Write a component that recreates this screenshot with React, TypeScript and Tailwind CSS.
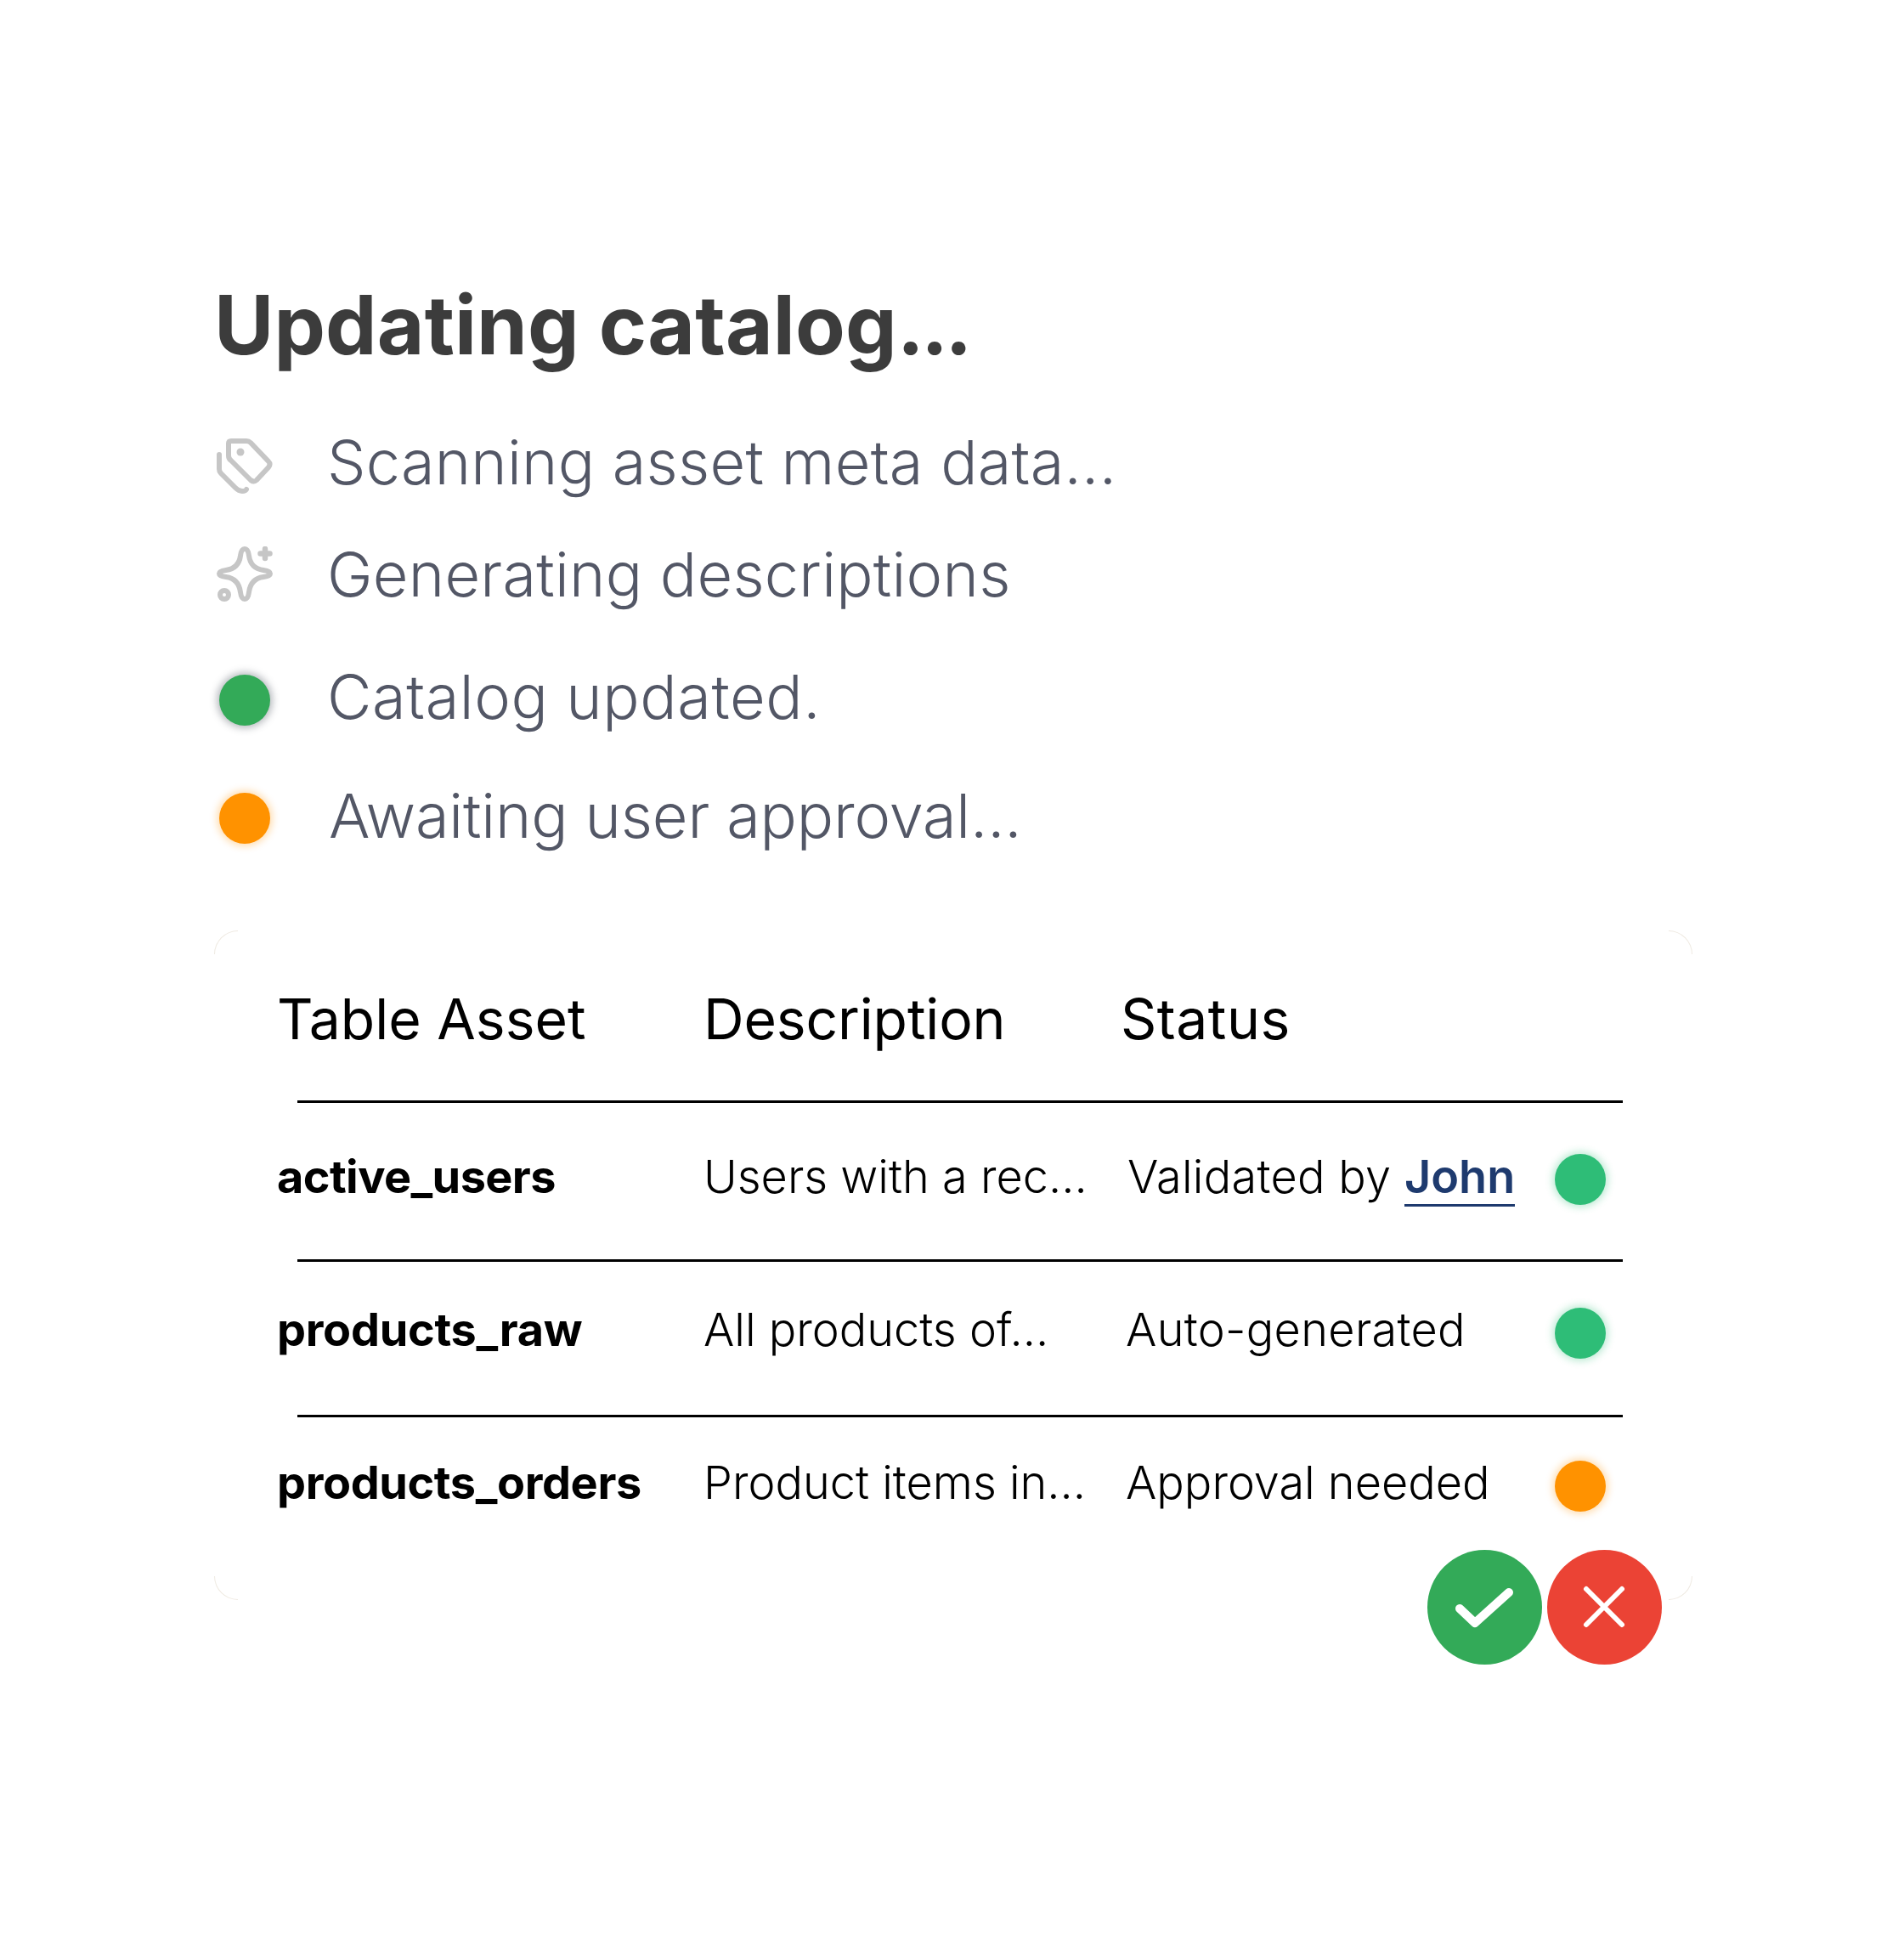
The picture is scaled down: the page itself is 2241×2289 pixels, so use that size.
const font = { fontFamily: 'Inter, "Noto Sans", sans-serif' };

function TagsIcon() {
  return (
    <svg width="66" height="66" viewBox="0 0 66 66" fill="none" stroke="#c6c6c6" strokeWidth="6" strokeLinecap="round" strokeLinejoin="round">
      <path d="M17 3H35Q38 3 40 5L61 27Q64 30 61 34L47 49Q44 52 40 49L17 26Q14 24 14 20V6Q14 3 17 3Z" />
      <circle cx="28" cy="16" r="4.500" fill="#c6c6c6" stroke="none" />
      <path d="M3 19V36Q3 39 5 41L22 58Q26 62 30 62Q34 62 35 60" />
    </svg>
  );
}

function SparkleIcon() {
  return (
    <svg width="66" height="66" viewBox="0 0 66 66" fill="none" stroke="#c6c6c6" strokeWidth="6" strokeLinecap="round" strokeLinejoin="round">
      <path d="M33 3Q37 3 38 11Q40 26 55 28Q63 29 63 32Q63 35 55 36Q40 38 38 54Q37 62 33 62Q29 62 28 54Q26 38 11 36Q3 35 3 32Q3 29 11 28Q26 26 28 11Q29 3 33 3Z" />
      <path d="M57 3V14M51.500 8.500H62.500" strokeWidth="6.500" />
      <circle cx="9" cy="57" r="5" />
    </svg>
  );
}

const rows = [
  { name: 'active_users', nameClass: 'tracking-[-0.6px]', desc: 'Users with a rec...', status: 'Validated by ', statusClass: 'tracking-[0.3px]', link: 'John', dot: 'table-green', pad: 'pl-[8px]', h: 'h-[187px]', pb: 'pb-[7px]', mb: 'mb-[8px]' },
  { name: 'products_raw', nameClass: 'tracking-[-0.3px]', desc: 'All products of...', status: 'Auto-generated', statusClass: 'tracking-[0.3px]', link: '', dot: 'table-green', pad: 'pl-[6px]', h: 'h-[183px]', pb: 'pb-[15px]', mb: 'mb-[10px]' },
  { name: 'products_orders', nameClass: 'tracking-[-0.4px]', desc: 'Product items in...', status: 'Approval needed', statusClass: 'tracking-normal', link: '', dot: 'orange', pad: 'pl-[6px]', h: 'h-[165px]', pb: 'pb-[4px]', mb: 'mb-[8px]' },
];

export default function App() {
  return (
    <div className="min-h-[2289px] bg-white pl-[252px] pt-[320px]" style={font}>
      <h1 className="h-[125px] text-[96px] leading-[125px] font-bold tracking-[0.15px] text-[#3c3c3c]">
        Updating catalog<span className="tracking-[-3.800px]">...</span>
      </h1>

      <div className="mt-[55px] flex flex-col text-[72px] leading-[88px] font-light text-[#535766]">
        <div className="flex h-[88px] items-center">
          <div className="ml-[3px] mt-[10px] w-[130px]"><TagsIcon /></div>
          <span className="tracking-[0.25px]">Scanning asset meta data...</span>
        </div>
        <div className="mt-[44px] flex h-[88px] items-center">
          <div className="ml-[3px] w-[130px]"><SparkleIcon /></div>
          <span className="tracking-[0.25px]">Generating descriptions</span>
        </div>
        <div className="mt-[56px] flex h-[88px] items-center">
          <div className="ml-[6px] mt-[8px] mr-[67px] h-[60px] w-[60px] rounded-full bg-[#33aa58] shadow-[0_0_9px_3px_rgba(70,80,90,0.38)]" />
          <span className="tracking-[0.6px]">Catalog updated.</span>
        </div>
        <div className="mt-[52px] flex h-[88px] items-center">
          <div className="ml-[6px] mt-[6px] mr-[69px] h-[60px] w-[60px] rounded-full bg-[#ff9200] shadow-[0_0_9px_3px_rgba(255,146,0,0.3)]" />
          <span className="tracking-[-0.15px]">Awaiting user approval...</span>
        </div>
      </div>

      <div className="relative mt-[91px] h-[788px] w-[1740px] pl-[74px] text-black">
        <span className="absolute left-0 top-0 h-[28px] w-[28px] rounded-tl-[28px] border-t border-l border-[#efeae2]" />
        <span className="absolute right-0 top-0 h-[28px] w-[28px] rounded-tr-[28px] border-t border-r border-[#efeae2]" />
        <span className="absolute bottom-0 left-0 h-[28px] w-[28px] rounded-bl-[28px] border-b border-l border-[#efeae2]" />
        <span className="absolute bottom-0 right-0 h-[28px] w-[28px] rounded-br-[28px] border-b border-r border-[#efeae2]" />

        <div className="flex h-[200px] items-center pt-[8px] text-[66px] font-normal">
          <span className="w-[502px]">Table Asset</span>
          <span className="w-[491px] tracking-[-0.15px]">Description</span>
          <span className="tracking-[0.5px]">Status</span>
        </div>
        {rows.map((r) => (
          <div key={r.name} className={r.h}>
            <div className="ml-[24px] h-[3px] w-[1560px] bg-black" />
            <div className={`flex h-full items-center text-[54px] ${r.pb}`}>
              <span className={`w-[502px] font-bold ${r.mb} ${r.nameClass}`}>{r.name}</span>
              <span className={`w-[491px] font-light ${r.mb}`}>{r.desc}</span>
              <span className={`w-[511px] font-light ${r.mb} ${r.statusClass} ${r.pad}`}>
                {r.status}
                {r.link && <span className="border-b-[3px] border-[#1e3a6e] font-semibold tracking-normal text-[#1e3a6e]">{r.link}</span>}
              </span>
              {r.dot === 'orange' ? (
                <div className="h-[60px] w-[60px] rounded-full bg-[#ff9200] shadow-[0_0_9px_3px_rgba(255,146,0,0.3)]" />
              ) : (
                <div className="h-[60px] w-[60px] rounded-full bg-[#2ebd77] shadow-[0_0_9px_3px_rgba(46,189,119,0.3)]" />
              )}
            </div>
          </div>
        ))}
        <div className="absolute left-[1428px] top-[729px] flex gap-[6px]">
          <button className="flex h-[135px] w-[135px] items-center justify-center rounded-full bg-[#33aa58]">
            <svg width="135" height="135" viewBox="0 0 135 135" fill="none" stroke="white" strokeWidth="10" strokeLinecap="round" strokeLinejoin="round">
              <path d="M38 69L56 86L96 50" />
            </svg>
          </button>
          <button className="flex h-[135px] w-[135px] items-center justify-center rounded-full bg-[#eb4335]">
            <svg width="135" height="135" viewBox="0 0 135 135" fill="none" stroke="white" strokeWidth="6" strokeLinecap="round">
              <path d="M46 46L88 88M88 46L46 88" />
            </svg>
          </button>
        </div>
      </div>
    </div>
  );
}
